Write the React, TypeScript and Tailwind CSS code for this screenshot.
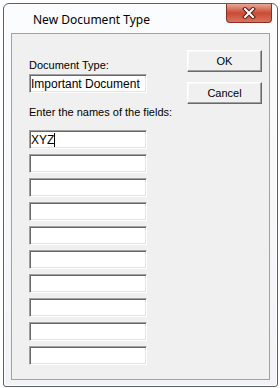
const font = { fontFamily: '"Liberation Sans", Arial, sans-serif' };

const Field = ({ value, caret }: { value?: string; caret?: boolean }) => (
  <div className="h-[19px] w-[118px] bg-white border border-t-[#a0a0a0] border-l-[#a0a0a0] border-r-white border-b-white shadow-[inset_1px_1px_0_#696969,inset_-1px_-1px_0_#e3e3e3] flex items-center pl-[1px] text-[12px] text-black leading-none">
    {value}
    {caret && <span className="inline-block w-px h-[14px] bg-black" />}
  </div>
);

const Btn = ({ label }: { label: string }) => (
  <button className="h-[22px] w-[75px] bg-[#f0f0f0] border border-t-white border-l-white border-r-[#696969] border-b-[#696969] shadow-[inset_-1px_-1px_0_#a0a0a0,inset_1px_1px_0_#f8f8f8] text-[11px] text-black leading-none">
    {label}
  </button>
);

export default function App() {
  return (
    <div className="w-[280px] h-[388px] bg-white overflow-hidden pt-[3px] pl-[3px]" style={font}>
      <div className="w-[275px] h-[384px] flex flex-col border border-[#5a5f66] rounded-t-[6px] rounded-b-[3px] bg-gradient-to-b from-[#fbfcfd] to-[#f1f3f6] shadow-[inset_0_0_0_1px_#ffffff]">
        <div className="h-[29px] flex justify-between items-start">
          <div className="pl-[29px] pt-[8px] text-[12px] leading-[16px] text-black" style={{ fontFamily: '"Noto Sans", "Open Sans", sans-serif' }}>
            New Document Type
          </div>
          <div className="mr-[5px] w-[46px] h-[19px] rounded-b-[4px] border border-t-0 border-[#8a2e22] bg-gradient-to-b from-[#e7a797] via-[#c94a35] to-[#d8745d] flex items-center justify-center">
            <svg width="14" height="12" viewBox="0 0 14 12">
              <path d="M3 2 L11 10 M11 2 L3 10" stroke="#5a1a12" strokeWidth="4" strokeLinecap="square" />
              <path d="M3 2 L11 10 M11 2 L3 10" stroke="#ffffff" strokeWidth="2" strokeLinecap="square" />
            </svg>
          </div>
        </div>
        <div className="flex-1 mx-[7px] mb-[6px] border border-[#9da3aa] bg-[#f0f0f0] flex pl-[17px]">
          <div className="w-[118px] flex flex-col">
            <div className="pt-[25px] mb-[2px] text-[11px] leading-[13px] text-black">Document Type:</div>
            <div>
              <Field value="Important Document" />
            </div>
            <div className="mt-[13px] text-[11px] leading-[13px] text-black whitespace-nowrap">
              Enter the names of the fields:
            </div>
            <div className="mt-[11px] flex flex-col gap-[5px]">
              <Field value="XYZ" caret />
              {Array.from({ length: 9 }).map((_, i) => (
                <Field key={i} />
              ))}
            </div>
          </div>
          <div className="ml-[40px] pt-[16px] flex flex-col gap-[10px]">
            <Btn label="OK" />
            <Btn label="Cancel" />
          </div>
        </div>
      </div>
    </div>
  );
}
